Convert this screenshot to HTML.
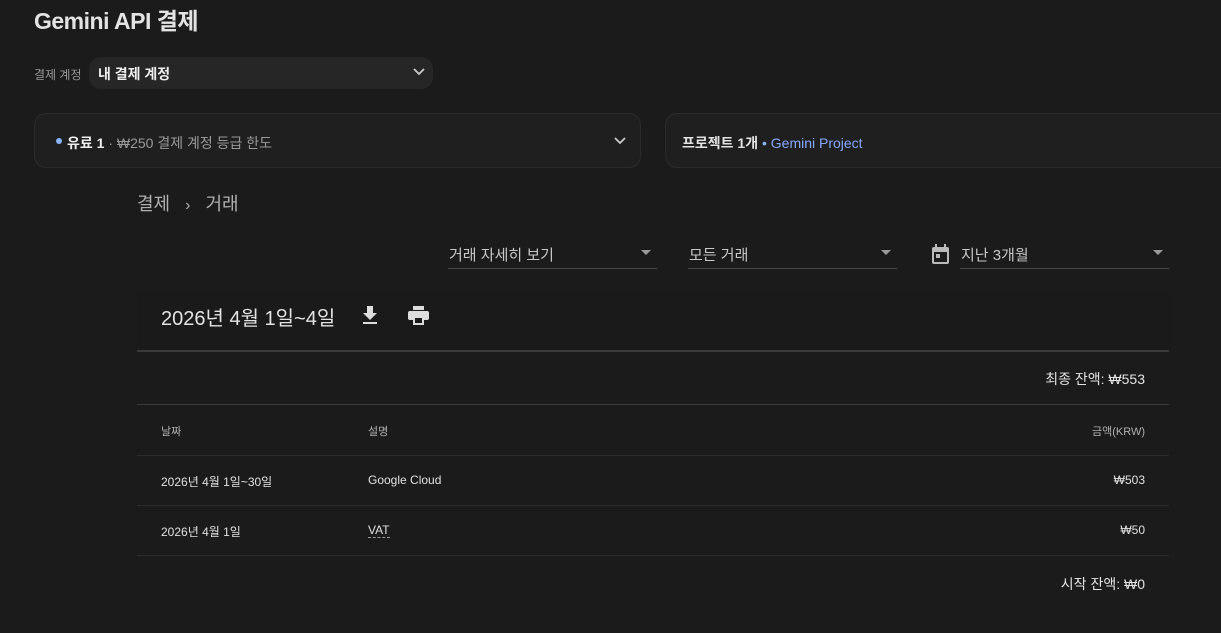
<!DOCTYPE html>
<html><head><meta charset="utf-8"><style>
*{box-sizing:border-box;margin:0;padding:0}
body{width:1221px;height:633px;background:#1b1b1b;color:#e3e3e3;font-family:"Liberation Sans","Noto Sans CJK KR",sans-serif;position:relative;overflow:hidden}
.a{position:absolute;white-space:nowrap}
.card{position:absolute;background:#1f1f1f;border:1px solid #2b2b2b;border-radius:12px}
.line{position:absolute;height:1px;background:#3a3a3a}
.sel{position:absolute;border-bottom:1px solid #4a4a4a;height:30px;font-size:15px;color:#c8c8c8}
.tri{position:absolute;right:6px;top:11px;width:0;height:0;border-left:5px solid transparent;border-right:5px solid transparent;border-top:5px solid #9a9a9a}
.t{font-size:12px;color:#e0e0e0}
</style></head><body>
<div class="a" style="left:34px;top:2px;font-size:23px;font-weight:bold;color:#e3e3e3;letter-spacing:-0.5px">Gemini API 결제</div>
<div class="a" style="left:34px;top:66px;font-size:12px;color:#9a9a9a">결제 계정</div>
<div class="card" style="left:89px;top:57px;width:344px;height:32px;border:none;background:#262626">
 <div class="a" style="left:9px;top:7px;font-size:14px;font-weight:bold;color:#eee">내 결제 계정</div>
 <svg class="a" style="right:8px;top:11px" width="12" height="8" viewBox="0 0 12 8"><path d="M1 1l5 5 5-5" stroke="#ccc" stroke-width="1.8" fill="none"/></svg>
</div>
<div class="card" style="left:34px;top:113px;width:607px;height:55px">
 <div class="a" style="left:21px;top:24px;width:6px;height:6px;border-radius:3px;background:#8ab4f8"></div>
 <div class="a" style="left:32px;top:19px;font-size:14px;color:#9a9a9a"><b style="color:#eee">유료 1</b> · ₩250 결제 계정 등급 한도</div>
 <svg class="a" style="right:14px;top:23px" width="12" height="8" viewBox="0 0 12 8"><path d="M1 1l5 5 5-5" stroke="#ccc" stroke-width="1.8" fill="none"/></svg>
</div>
<div class="card" style="left:665px;top:113px;width:580px;height:55px">
 <div class="a" style="left:16px;top:19px;font-size:14px;color:#e3e3e3"><b>프로젝트 1개</b> <span style="color:#8ab4f8">•</span> <span style="color:#86a8ff">Gemini Project</span></div>
</div>
<div class="a" style="left:137px;top:190px;font-size:18px;color:#b0b0b0">결제 <span style="margin:0 10px;font-size:16px">›</span> 거래</div>
<div class="sel" style="left:448px;top:239px;width:209px"><span class="a" style="left:1px;top:5px">거래 자세히 보기</span><div class="tri"></div></div>
<div class="sel" style="left:688px;top:239px;width:209px"><span class="a" style="left:1px;top:5px">모든 거래</span><div class="tri"></div></div>
<svg class="a" style="left:931px;top:244px" width="19" height="21" viewBox="0 0 19 21"><rect x="1" y="3" width="17" height="17" rx="2" fill="#bbb"/><rect x="3" y="8" width="13" height="10" fill="#1b1b1b"/><rect x="4" y="0" width="2" height="4" fill="#bbb"/><rect x="13" y="0" width="2" height="4" fill="#bbb"/><rect x="5" y="10" width="4" height="4" fill="#bbb"/></svg>
<div class="sel" style="left:960px;top:239px;width:209px"><span class="a" style="left:1px;top:5px">지난 3개월</span><div class="tri"></div></div>
<div class="a" style="left:137px;top:290px;width:1032px;height:60px;background:#1a1a1a"></div>
<div class="a" style="left:161px;top:302px;font-size:20px;color:#e3e3e3">2026년 4월 1일~4일</div>
<svg class="a" style="left:362px;top:306px" width="16" height="19" viewBox="0 0 16 19"><path d="M5 0h6v7h4l-7 7-7-7h4z" fill="#ddd"/><rect x="1" y="16" width="14" height="2" fill="#ddd"/></svg>
<svg class="a" style="left:408px;top:306px" width="21" height="19" viewBox="0 0 21 19"><rect x="5" y="0" width="11" height="4" fill="#ddd"/><rect x="0" y="5" width="21" height="9" rx="2" fill="#ddd"/><rect x="5" y="10" width="11" height="9" fill="#ddd"/><rect x="7" y="12" width="7" height="5" fill="#1b1b1b"/></svg>
<div class="line" style="left:137px;top:350px;width:1032px;height:2px"></div>
<div class="a" style="right:76px;top:369px;font-size:14px;color:#e3e3e3">최종 잔액: ₩553</div>
<div class="line" style="left:137px;top:404px;width:1032px"></div>
<div class="a" style="left:161px;top:423px;font-size:11px;color:#b0b0b0">날짜</div>
<div class="a" style="left:368px;top:423px;font-size:11px;color:#b0b0b0">설명</div>
<div class="a" style="right:76px;top:423px;font-size:11px;color:#b0b0b0">금액(KRW)</div>
<div class="line" style="left:137px;top:455px;width:1032px;background:#2c2c2c"></div>
<div class="a t" style="left:161px;top:473px">2026년 4월 1일~30일</div>
<div class="a t" style="left:368px;top:473px">Google Cloud</div>
<div class="a t" style="right:76px;top:473px">₩503</div>
<div class="line" style="left:137px;top:505px;width:1032px;background:#2c2c2c"></div>
<div class="a t" style="left:161px;top:523px">2026년 4월 1일</div>
<div class="a t" style="left:368px;top:523px;border-bottom:1px dashed #999">VAT</div>
<div class="a t" style="right:76px;top:523px">₩50</div>
<div class="line" style="left:137px;top:555px;width:1032px;background:#2c2c2c"></div>
<div class="a" style="right:76px;top:574px;font-size:14px;color:#e3e3e3">시작 잔액: ₩0</div>
</body></html>
